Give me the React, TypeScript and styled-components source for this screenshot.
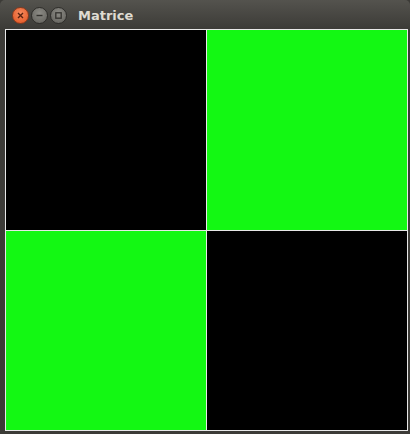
import React from 'react';
import styled, { createGlobalStyle } from 'styled-components';

const Global = createGlobalStyle`
  html, body { margin: 0; padding: 0; background: #3c3b37; }
`;

const Window = styled.div`
  width: 410px;
  height: 434px;
  background: #3c3b37;
  display: flex;
  flex-direction: column;
  overflow: hidden;
`;

const TitleBar = styled.div`
  height: 29px;
  flex: none;
  box-sizing: border-box;
  padding: 2px 0 0 12px;
  display: flex;
  align-items: center;
  background: linear-gradient(#54534e, #3c3b37);
  border-radius: 5px 5px 0 0;
`;

const Btn = styled.div<{ kind: 'close' | 'other' }>`
  width: 17px;
  height: 17px;
  border-radius: 50%;
  margin-right: 2px;
  display: flex;
  align-items: center;
  justify-content: center;
  box-sizing: border-box;
  border: 1px solid ${p => (p.kind === 'close' ? '#8a3a1e' : '#2e2d2a')};
  background: ${p =>
    p.kind === 'close'
      ? 'radial-gradient(circle at 50% 35%, #f58a5e, #e2531f)'
      : 'radial-gradient(circle at 50% 35%, #8c8b85, #5f5e59)'};
  > svg {
    display: block;
  }
`;

const Title = styled.div`
  margin-left: 9px;
  font-family: 'DejaVu Sans', 'Liberation Sans', sans-serif;
  font-weight: bold;
  font-size: 13px;
  color: #dfdbd2;
`;

const Frame = styled.div`
  flex: 1;
  padding: 0 2px 0 5px;
`;

const Board = styled.div`
  display: grid;
  grid-template-columns: 200px 200px;
  grid-template-rows: 200px 199px;
  gap: 1px;
  padding: 1px;
  background: #e8e8e8;
  width: max-content;
`;

const Cell = styled.div<{ on: boolean }>`
  background: ${p => (p.on ? '#13f813' : '#000000')};
`;

const cells = [false, true, true, false];

export default function App() {
  return (
    <Window>
      <Global />
      <TitleBar>
        <Btn kind="close">
          <svg width="7" height="7" viewBox="0 0 7 7">
            <path d="M1 1L6 6M6 1L1 6" stroke="#5a2210" strokeWidth="1.4" />
          </svg>
        </Btn>
        <Btn kind="other">
          <svg width="7" height="7" viewBox="0 0 7 7">
            <path d="M0.5 3.5H6.5" stroke="#33322e" strokeWidth="1.4" />
          </svg>
        </Btn>
        <Btn kind="other">
          <svg width="7" height="7" viewBox="0 0 7 7">
            <rect x="0.8" y="0.8" width="5.4" height="5.4" fill="none" stroke="#33322e" strokeWidth="1.3" />
          </svg>
        </Btn>
        <Title>Matrice</Title>
      </TitleBar>
      <Frame>
        <Board>
          {cells.map((on, i) => (
            <Cell key={i} on={on} />
          ))}
        </Board>
      </Frame>
    </Window>
  );
}
